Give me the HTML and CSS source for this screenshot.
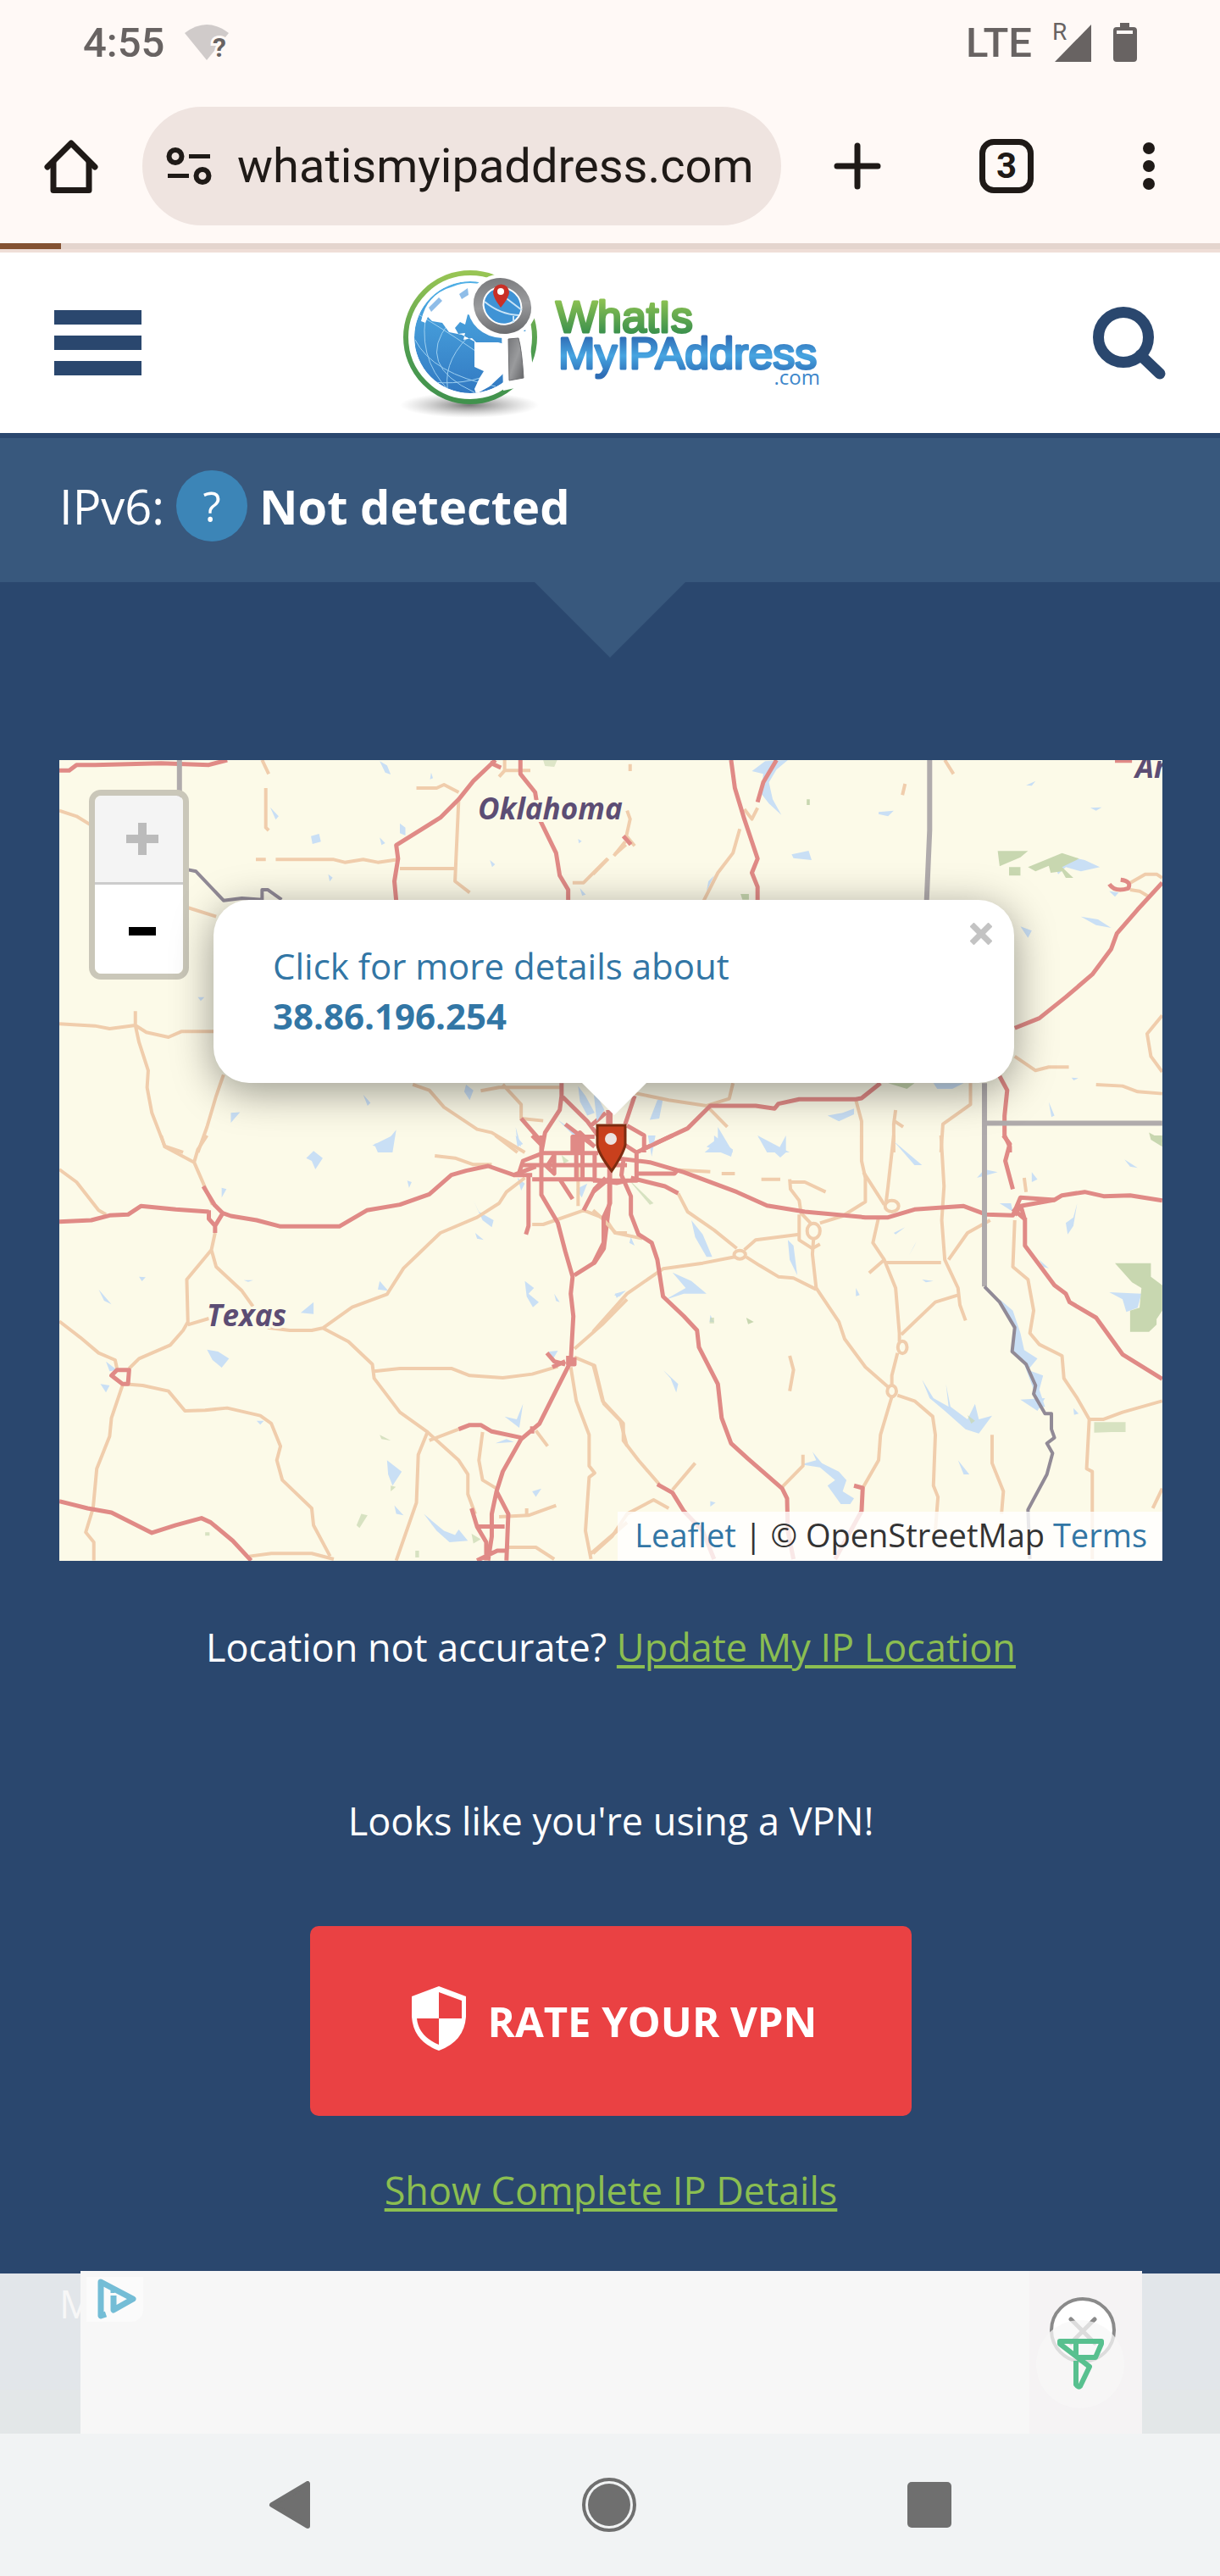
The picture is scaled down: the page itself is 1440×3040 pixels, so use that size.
FILE: index.html
```html
<!DOCTYPE html>
<html lang="en">
<head>
<meta charset="utf-8">
<meta name="viewport" content="width=device-width, initial-scale=1">
<title>What Is My IP Address</title>
<link rel="stylesheet" href="styles.css">
</head>
<body>
<div class="status">
  <div class="status-group">
    <span class="clock">4:55</span>
    <svg class="wifi" viewBox="0 0 52 42" aria-hidden="true"><path fill="#d0cbca" d="M0 10Q26-10 52 10L26 42z"/><text x="33" y="38" class="wifi-mark">?</text></svg>
  </div>
  <div class="status-group status-right">
    <span class="network">LTE</span>
    <svg class="signal" viewBox="0 0 48 48" aria-hidden="true"><text x="0" y="21" class="roaming">R</text><path fill="#686362" d="M46 3V47H3z"/></svg>
    <svg class="battery" viewBox="0 0 28 46" aria-hidden="true"><path fill="#686362" d="M8 0H19V5H24Q28 5 28 9V42Q28 46 24 46H4Q0 46 0 42V9Q0 5 4 5H8z"/><path fill="#fff9f6" d="M4 9H23V13H4z"/></svg>
  </div>
</div>
<div class="toolbar">
  <button class="icon-button" type="button" aria-label="Home"><svg width="64" height="64" viewBox="0 0 64 64"><path fill="none" stroke="#1f1a17" stroke-width="7" stroke-linejoin="round" stroke-linecap="round" d="M4 33L32 5L60 33"/><path fill="none" stroke="#1f1a17" stroke-width="7" stroke-linejoin="round" d="M11 27V60.500H53V27"/></svg></button>
  <div class="address">
    <svg width="54" height="44" viewBox="0 0 54 44" aria-hidden="true"><g fill="none" stroke="#1f1a17"><circle cx="11" cy="10.500" r="7.500" stroke-width="6"/><circle cx="43" cy="33.500" r="7.500" stroke-width="6"/><path stroke-width="5" d="M27 10.500H52M2 33.500H27"/></g></svg>
    <input type="text" value="whatismyipaddress.com" aria-label="Address">
  </div>
  <div class="actions">
    <button class="icon-button" type="button" aria-label="New tab"><svg width="64" height="64" viewBox="0 0 64 64"><path stroke="#1f1a17" stroke-width="7" stroke-linecap="round" d="M32 8V56M8 32H56"/></svg></button>
    <button class="icon-button tabs" type="button" aria-label="Open tabs">3</button>
    <button class="icon-button" type="button" aria-label="Menu"><svg width="48" height="64" viewBox="0 0 48 64"><g fill="#1f1a17"><circle cx="24" cy="11" r="7"/><circle cx="24" cy="32" r="7"/><circle cx="24" cy="53" r="7"/></g></svg></button>
  </div>
</div>
<div class="progress"><div class="progress-bar"></div></div>

<header class="site-header">
  <button class="icon-button burger" type="button" aria-label="Site menu"><span></span><span></span><span></span></button>
  <a class="logo" href="#">
    <svg width="500" height="184" viewBox="470 312 500 184" role="img" aria-label="WhatIsMyIPAddress.com">
      <defs>
        <linearGradient id="ring" x1="0" y1="0" x2="0" y2="1"><stop offset="0" stop-color="#98c554"/><stop offset=".6" stop-color="#4e9c50"/><stop offset="1" stop-color="#41924d"/></linearGradient>
        <linearGradient id="sea" x1="0" y1="0" x2="0" y2="1"><stop offset="0" stop-color="#50b0e6"/><stop offset="1" stop-color="#3279c2"/></linearGradient>
        <linearGradient id="metal" x1="0" y1="0" x2="1" y2="1"><stop offset="0" stop-color="#76777a"/><stop offset=".5" stop-color="#9a9b9d"/><stop offset="1" stop-color="#626366"/></linearGradient>
        <radialGradient id="shade"><stop offset="0" stop-color="#555" stop-opacity=".8"/><stop offset="1" stop-color="#999" stop-opacity="0"/></radialGradient>
        <linearGradient id="word1" gradientUnits="userSpaceOnUse" x1="0" y1="353" x2="0" y2="392"><stop offset="0" stop-color="#8cc152"/><stop offset="1" stop-color="#3c914d"/></linearGradient>
        <linearGradient id="word2" gradientUnits="userSpaceOnUse" x1="0" y1="396" x2="0" y2="442"><stop offset="0" stop-color="#2f6cb5"/><stop offset=".5" stop-color="#47a5e1"/><stop offset="1" stop-color="#2d6cb5"/></linearGradient>
        <clipPath id="globe"><circle cx="555" cy="397" r="66"/></clipPath>
      </defs>
      <ellipse cx="554" cy="477" rx="82" ry="15" fill="url(#shade)"/>
      <circle cx="555" cy="397" r="76" fill="#fff" stroke="url(#ring)" stroke-width="6"/>
      <g clip-path="url(#globe)">
        <circle cx="555" cy="397" r="66" fill="url(#sea)"/>
        <path fill="none" stroke="#9fd0f0" d="M490 400Q510 440 585 455M505 360Q490 420 530 460M530 380Q490 430 560 462M552 397Q520 430 530 465M494 370Q560 410 590 435M510 450Q560 455 600 430"/>
        <path fill="#fff" d="M497 378Q503 346 535 337Q560 326 600 345V382L570 376L552 370L549 382L543 379L537 386L541 393L549 392L547 400L557 398L562 403H588Q602 405 608 418L594 440L578 455L562 464L560 458L566 445L571 437L560 432V402L545 394L530 391L522 380L510 378L505 373L502 380z"/>
        <path fill="#8fbde8" d="M542 346L552 339L553 347L545 352zM506 362L518 350L522 354L509 367z"/>
      </g>
      <path fill="none" stroke="#fff" stroke-width="16" d="M594 326L632 350V372"/>
      <path fill="#fff" d="M592 390H624L631 452L594 460z"/>
      <ellipse cx="593" cy="360" rx="41" ry="38" fill="#fff"/>
      <ellipse cx="593" cy="360" rx="29" ry="26" transform="rotate(35 593 360)" fill="#55b0e6" stroke="url(#metal)" stroke-width="12"/>
      <ellipse cx="593" cy="360" rx="23" ry="21" transform="rotate(35 593 360)" fill="#3f93d5" stroke="#fff" stroke-width="2"/>
      <path fill="none" stroke="#c9e4f7" stroke-width="2" d="M572 355Q590 370 612 371M587 343L616 365M606 372V380"/>
      <path fill="#c92f27" d="M591 362Q582 350 582 344A9 9 0 0 1 601 344Q601 350 591 362z"/><circle cx="591" cy="343" r="4" fill="#fff"/>
      <path fill="url(#metal)" stroke="#6d6e71" d="M600 399L612 398Q616 412 618 445L601 448z"/>
      <text x="656" y="391" class="logo-what">WhatIs</text>
      <text x="659" y="434" class="logo-ip">MyIPAddress</text>
      <text x="968" y="453" text-anchor="end" class="logo-com">.com</text>
    </svg>
  </a>
  <button class="icon-button search" type="button" aria-label="Search"><svg width="86" height="86" viewBox="0 0 86 86"><circle cx="36" cy="36" r="29.500" fill="none" stroke="#2a476e" stroke-width="13"/><path stroke="#2a476e" stroke-width="13" stroke-linecap="round" d="M56 57L79 79"/></svg></button>
</header>

<main>
  <section class="ipv6">
    <span>IPv6:</span><button class="help" type="button">?</button><strong>Not detected</strong>
  </section>

  <div class="content">
    <div class="map">
      <svg class="tiles" viewBox="70 897 1302 945" preserveAspectRatio="xMidYMid slice" aria-hidden="true">
        <path fill="#fcfae8" d="M70 897H1372V1842H70z"/>
        <!-- north-west -->
        <g transform="translate(60 880) scale(.4337 .3333)">
          <path class="water" d="M895 55L915 70L925 102L910 95zM708 320L730 312L735 340L712 348zM950 275L965 290V318L950 310zM597 218L620 250L612 262zM895 325L910 345L900 352zM1035 95l5 20l-8 4zM1195 405l14 15l-8 10zM1435 330l10 8l-8 8zM400 890h18l-10 14zM850 1235l20 30l-8 10zM490 1300L515 1298L490 1335zM880 1410L915 1400L940 1360L930 1440H890zM1130 1200L1150 1220L1140 1255L1125 1225zM1435 1205L1455 1240L1480 1300L1460 1310L1440 1260zM1265 1350L1280 1420L1270 1410zM1380 1325L1440 1380L1430 1390zM1440 505l16 22l-10 4zM755 455l12 12l-8 14z"/>
          <path class="park" opacity=".6" d="M1340 51H1378L1370 75L1345 72z"/>
          <g class="minor"><path d="M23 230L70 250L120 290M365 570L450 605M575 51L593 100M585 150V290L593 300M558 403H585M612 403H770L800 413L850 403L890 413L945 403M950 435H1100M1110 190L1100 480L1140 520M995 150H1050L1070 138L1110 165M1420 485H1450L1515 400M1535 385L1565 350M1235 51V88H1305M1235 88L1220 110"/><path d="M23 985L120 992L160 1002L230 990L260 1015L320 1032L355 1012H443M230 940V990L240 1050L265 1150L262 1210L275 1300L310 1418L360 1440M470 1165L450 1240L425 1350L400 1440M985 1200L1030 1220L1070 1280L1160 1358L1200 1370L1290 1440M1170 1222L1220 1210H1390M1230 1200L1280 1270V1320L1340 1328"/></g>
          <path class="major" d="M23 88H50L70 68L120 68L300 62L430 68L480 51M1210 51L1150 125L1110 190L1060 255L940 352L945 400L935 480L940 548M1278 51V100L1318 165L1330 260L1375 380L1385 460L1408 510V548M1195 60L1225 78M1390 1195V1240L1460 1330L1500 1400M1390 1240L1385 1290L1345 1370L1335 1440M1523 1290V1340M1340 1410L1300 1350L1280 1320M1470 1345L1510 1300M1420 1440V1385L1480 1385M1440 1440V1370L1480 1420M1400 1340L1480 1420"/>
          <path class="state" d="M350 51V185"/><path class="river" d="M365 437L395 445L470 548L520 540L575 545V510L590 510L628 545"/>
        </g>
        <!-- north-east -->
        <g transform="translate(700 880) scale(.4464 .3333)">
          <path class="water" d="M420 90L455 55L515 51L485 85L465 130L475 190L498 245L465 205L445 170L450 100zM755 235L795 230L780 250L755 242zM525 385L570 372L578 405L530 398zM1215 410L1250 390L1300 405L1340 430L1290 445L1250 430L1230 455zM1290 605L1335 615L1370 645L1330 635zM1130 640L1160 655L1150 680zM1145 140L1170 125L1160 142zM1315 220L1345 218L1330 230zM900 1195H980L950 1215H910zM170 1255L185 1250L175 1320L150 1325zM1205 1262L1220 1310L1212 1315zM620 1310L660 1300L690 1285V1305L650 1330zM330 1350L370 1440H295L330 1400zM435 1380L520 1440H460zM320 460L300 515L305 480zM1365 515L1390 520L1380 535zM0 1210L30 1290L10 1330zM1265 1175l18 2l-12 8z"/>
          <path class="park" d="M1070 373H1150L1130 395L1075 427zM1100 430H1130V460H1100zM1150 430L1240 380L1285 400L1240 430L1270 468L1250 468L1240 445L1210 450L1205 425L1170 445zM1470 1370L1505 1395V1420L1475 1395zM390 525H412V545H395zM780 1195H850L830 1215zM565 190h8v20h-8z"/>
          <g class="minor"><path d="M930 51L953 100M825 135L818 175M435 220L420 260L400 225M388 295L370 380L330 450L293 548M90 230L98 260L88 320L110 355M85 340L55 390M40 400L0 455M98 65V90M110 1230L200 1255L300 1275L355 1350M370 1195L360 1250L300 1275M695 1255L710 1330V1440M800 1290L795 1340V1440M798 1330L820 1350"/><path d="M998 1195V1270L925 1340L920 1440M1115 1100L1170 1150L1205 1138H1258M1330 1200L1400 1205L1440 1225L1505 1232M1505 955L1465 1020L1475 1100L1505 1155M1415 490L1460 455H1490L1505 468M1420 510L1445 515L1470 535"/></g>
          <path class="major" d="M365 51L375 150L400 260L420 340L435 400L420 450L435 500V548M485 51L450 130L435 200M1505 485L1440 580L1385 665L1370 720L1320 810L1250 890L1180 965L1115 1000M1365 490Q1380 520 1415 505Q1425 480 1395 475M1075 1170L1095 1220L1088 1310V1380L1102 1420V1440M760 1195L710 1248L695 1252H545L490 1268L480 1285L430 1275H310L250 1355L130 1430M110 1240L85 1340M90 1345L135 1380V1440M40 1290V1340M80 320L100 350M1380 53H1425"/>
          <path class="state" d="M890 51V300L882 548M1035 1195V1440M1035 1337H1505"/>
        </g>
        <!-- south-west -->
        <g transform="translate(60 1340) scale(.4337 .3333)">
          <path class="water" d="M695 80L715 55L740 80L720 120L710 90zM875 35L930 0L915 50zM465 185L478 190L465 220zM970 160L982 165L975 185zM130 545L165 598L145 585zM240 500l18 2l-10 14zM895 515L918 550L890 545zM680 628L715 590V632zM425 758L455 765L485 790L465 822L440 795zM150 800L180 830L160 835zM135 880L160 885L150 910zM1290 515L1315 540L1300 560L1328 590L1312 608L1295 570zM1285 950L1275 1035L1235 995L1268 1005zM915 1150L955 1190L930 1240L918 1200zM1210 1090L1240 1075L1260 1085zM935 1310L960 1345L940 1340zM1015 1340L1070 1400L1100 1415L1110 1395L1135 1435L1085 1440L1050 1400zM1310 1260L1335 1250L1320 1280zM1150 230L1165 270L1205 300L1200 325L1175 300zM1155 345L1178 370L1160 365zM1265 0L1285 30L1270 40zM1430 190L1460 170L1445 220zM1355 765L1380 762L1365 795zM1535 560L1565 550L1540 575zM1270 150L1290 170L1280 195zM1370 560l15 30l-10-4zM560 1010h20l-10 14zM525 512h26l-14 6z"/>
          <path class="park" opacity=".7" d="M1145 1410L1170 1430L1150 1445zM845 1340L862 1345L840 1390L832 1380zM895 1060L925 1080L900 1075zM1390 70l20 20l-14 10zM925 1240l14 4l-14 16zM420 1405h12v12h-12zM992 1470h10v24h-10z"/>
          <g class="minor"><path d="M300 0L310 40L390 95L440 245M390 95L400 50L425 0M23 120L70 165L130 265L150 280M447 345L437 405L370 510L373 660L360 690L325 742L240 790L213 825M437 405L450 465L520 550L550 605M373 670L430 648M23 658L80 715L130 770L175 795L180 825M200 880L250 885L320 905L365 975L420 973L480 965L570 992L600 1020L625 1100L615 1150L630 1220L710 1320L715 1380L760 1490M195 885L165 1000L160 1065L125 1180L115 1320L95 1405L117 1440V1505"/><path d="M590 680L650 690H710L740 682L820 608L915 562L960 470L1000 420L1060 345L1160 290L1220 240L1240 200L1290 150M740 682L810 730L875 810L880 860L950 980L1025 1050L1110 1150L1135 1200V1270L1155 1340M880 835L950 825H1090L1140 850L1230 858L1310 845L1380 818M1025 1050L1000 1130L995 1300L940 1505M1030 1080L1110 1040M1175 1050L1165 1150L1175 1220L1213 1250M1045 72L1100 80L1150 103H1200M1210 0L1270 60M1310 315H1340L1450 265L1510 295L1535 345H1568M1568 580L1500 670L1425 755M1425 785L1480 815L1505 950L1550 1010L1568 1100M1415 820L1430 940L1465 1060V1170L1480 1195L1465 1210L1455 1400L1470 1500M1470 1480L1568 1370M1220 1350L1300 1345L1375 1310M1295 1320V1345M1245 1458H1320L1370 1500M540 1490L600 1480H710L770 1500M1320 1045L1352 1100M1435 100V250"/></g>
          <path class="major" d="M23 305L110 300L160 283L210 280L245 250L340 262L430 270M468 275L490 285L560 300L625 322H785L860 265L950 245L1030 208L1090 140L1130 125L1190 108L1260 140L1320 110M430 265V295L447 320L468 275L445 245L415 180M447 315V345M23 1295L100 1320L165 1335L275 1407L340 1380L410 1355L435 1370L495 1435L545 1505"/>
          <path class="major" d="M1335 0V210L1380 310L1400 410L1420 500L1415 560L1422 640L1415 800L1380 890L1330 1020L1280 1075L1230 1190L1213 1260L1200 1340V1420L1190 1505M1213 1260L1245 1340L1240 1505M1110 1040L1140 1025H1170L1200 1048L1280 1070M1520 60V240L1505 400L1480 450L1425 495M1310 0L1340 40M1275 130L1285 90L1340 62H1490M1280 105H1568M1260 140H1310M1310 155H1470L1540 168L1568 160M1430 0V150M1447 0V150M1480 60V150M1370 70L1350 110L1370 135V70M1300 140V320L1293 350M1385 155L1420 225M1450 265L1480 190L1510 150M1350 770L1370 800L1400 810M1365 820L1400 800M1408 780V810H1425V785M165 850L180 830H213L210 880H195zM1160 1385H1235M1145 1320L1160 1385L1185 1440V1505M1160 1505L1215 1470H1240M1310 1030V1055"/>
        </g>
        <!-- south-east -->
        <g transform="translate(700 1340) scale(.4464 .3333)">
          <path class="water" d="M870 865L900 930L940 960L933 880L945 960L990 1005L1010 950L1020 1005L1055 992L1020 1055L985 1040L930 975L890 930zM580 1120L605 1160L650 1190L670 1220L660 1260L690 1285L680 1305L655 1305L620 1240L640 1220L600 1175L550 1165L590 1150zM260 300L290 350L315 430L300 430L270 360zM210 485L260 515L300 560H240L190 582L245 540zM515 370L530 390L540 495L520 440zM300 40L320 20L320 0L370 50L365 75L310 45zM435 5L490 50L510 0V60L495 78L460 35zM795 20L870 105L850 105zM1075 580L1110 620L1130 700L1140 760L1175 790L1150 830L1190 850L1180 900L1195 960L1170 970L1165 900L1140 810L1110 765L1115 680zM1130 935L1195 930L1175 975zM1280 240L1270 320L1255 350L1250 310L1270 290zM1180 440L1205 470L1190 465zM1365 555L1450 560L1440 610L1410 625L1400 580zM1405 85L1440 115L1420 110zM1015 150L1035 120L1070 130zM1075 240L1105 240L1110 270zM965 1150L995 1200L980 1200zM185 830L225 880L220 910L205 860zM55 565L85 550L70 570zM855 375L835 425L850 390zM870 510L900 515L880 520zM145 0H165L155 75zM630 390l8 25M645 385l8 25zM795 345L825 325L800 350zM310 635l10 25h-12zM695 540l10 25l-10 4zM755 735l8 30zM1160 130L1175 155L1160 165zM1205 345L1235 385zM100 360l10 30l-14-10zM1270 965l14 20l-12 4zM310 1295l14 5l-14 14z"/>
          <path class="park" d="M1380 452H1475V500L1505 530V620L1490 650V670L1470 695H1420V620L1445 610L1450 540L1425 520zM1480 0H1505V25zM405 645L425 660L410 668z"/><path class="park" opacity=".7" d="M1325 1015H1408V1050H1370L1325 1052zM90 150L160 240L150 245zM310 645h10v20h-12zM990 990L1010 1010L1000 1020z"/>
          <g class="minor"><path d="M225 205L250 270L320 335L380 400M405 430L440 460L490 500L530 505L590 545M0 695L90 560L185 472L290 452L375 430M400 405L430 370L545 350M600 310L660 285L720 235V150L710 90V0M520 155L522 190L545 230L550 275L575 310M445 155H495M520 165H560L615 200M340 135H375M225 122L310 128M583 365L580 420L590 540L650 660L665 720L720 820L780 890M790 925L760 1060L755 1150L713 1248M805 920L850 940L898 995L905 1060L900 1240L912 1280L905 1400"/><path d="M795 0L780 180L775 235M715 130L770 245M755 290L740 380L770 440L800 540L810 700V730M805 770L790 850V890M815 705L905 590L965 565M770 450H920M940 440L990 345L1050 300M920 0L928 180L922 300L930 440L965 540L970 600L985 655M730 487L770 440M1140 150L1145 200M1115 300L1110 465L1150 510L1165 620L1155 700L1180 740L1240 780L1245 860L1280 930L1312 1005L1305 1180L1320 1190V1500M1312 1005H1350L1400 980L1505 940M1055 1060V1160L1085 1260L1080 1340M0 810L25 940L80 1020V1080L120 1150L175 1235M210 1255L270 1160M500 1245L555 1170V1130M0 1480L50 1420L90 1340L160 1290L200 1320M1505 1250L1480 1320M520 780L530 830L520 905M545 280V370L580 400L600 385M0 265L25 295L60 345L130 365"/><ellipse cx="388" cy="422" rx="15" ry="15"/><ellipse cx="583" cy="338" rx="17" ry="27"/><ellipse cx="790" cy="905" rx="12" ry="20"/><ellipse cx="790" cy="250" rx="18" ry="20"/><ellipse cx="818" cy="750" rx="12" ry="22"/></g>
          <path class="major" d="M45 100V240L28 290V380L0 455M80 90L75 140L100 215V280L120 350L155 380L170 440L185 570L240 640L275 690L280 750L330 880L340 1000L365 1090L410 1145L500 1250L513 1285L515 1400L530 1500M60 80L150 95L240 130L380 200L460 248L560 270L720 290H780L850 262L980 250L1040 280L1110 283L1130 220L1220 228L1240 212L1300 200L1350 215L1420 212L1505 230M100 150L190 180L225 205M115 135H215L225 120M0 160H115V60L80 30M115 60L210 0M0 105H45M0 200L45 150"/>
          <path class="major" d="M1115 283L1130 250L1220 228M1130 245L1142 300V390L1220 530L1250 560L1260 590L1330 645L1400 775L1505 862M1110 260L1145 300M1085 0L1102 30L1090 90L1110 190M170 1235L210 1265L240 1330L290 1400L320 1500M690 1240L713 1248L710 1330L640 1500"/>
          <path class="state" d="M1035 0V535"/><path class="river" d="M1035 535L1075 590L1115 680L1108 765L1145 810L1170 885L1165 915L1195 985H1212V1040L1220 1070L1200 1090L1215 1125L1200 1200L1150 1325L1155 1500"/>
        </g>
        <path fill="#c9401d" stroke="#7d2c10" stroke-width="3" d="M705 1328H738V1351Q736 1361 722 1382Q706 1361 705 1351z"/><circle cx="721" cy="1344" r="7" fill="#ece4e1"/>
        <g class="place"><text x="564" y="967">Oklahoma</text><text x="244" y="1565">Texas</text><text x="1340" y="918">Ar</text></g>
      </svg>
      <div class="zoom"><button type="button" disabled aria-label="Zoom in"><svg width="38" height="38" viewBox="0 0 38 38"><path fill="#bbb" d="M14 0H24V14H38V24H24V38H14V24H0V14H14z"/></svg></button><button type="button" aria-label="Zoom out"><svg width="32" height="10" viewBox="0 0 32 10"><path d="M0 0H32V10H0z"/></svg></button></div>
      <div class="popup">
        <a href="#">Click for more details about<br><strong>38.86.196.254</strong></a>
        <button class="close" type="button" aria-label="Close popup"><svg width="26" height="26" viewBox="0 0 26 26"><path stroke="#c3c3c3" stroke-width="7" d="M2 2L24 24M24 2L2 24"/></svg></button>
      </div>
      <div class="attribution"><a href="#">Leaflet</a> | © OpenStreetMap <a href="#">Terms</a></div>
    </div>
    <p class="line">Location not accurate? <a href="#">Update My IP Location</a></p>
    <p class="line vpn">Looks like you're using a VPN!</p>
    <button class="rate" type="button"><svg width="64" height="76" viewBox="0 0 64 76" aria-hidden="true"><path fill="#fff" d="M32 0L64 12V36Q62 65 32 76Q2 65 0 36V12z"/><path fill="#ea4143" d="M32 7L59 17V38H32zM6 38H32V69Q8 59 6 38z"/></svg>RATE YOUR VPN</button>
    <p class="line details"><a href="#">Show Complete IP Details</a></p>
  </div>
</main>

<aside class="ad-strip">
  <span class="behind">M</span>
  <div class="ad">
    <a class="adchoices" href="#" aria-label="AdChoices"><svg width="48" height="48" viewBox="0 0 48 48"><g fill="none" stroke="#74bdd6" stroke-linejoin="round"><path stroke-width="7" d="M11 42L5 44V4L43 24L20 37V20"/><path stroke-width="5" d="M19 14V17"/></g></svg></a>
    <div class="ad-side"><button class="icon-button" type="button" aria-label="Close ad"><svg width="108" height="136" viewBox="1222 2710 108 136"><circle cx="1278" cy="2752" r="37" fill="#fff" stroke="#8a8a8a" stroke-width="4"/><path stroke="#8a8a8a" stroke-width="5" stroke-linecap="round" d="M1264 2739L1292 2767M1292 2739L1264 2767"/><circle cx="1275" cy="2792" r="52" fill="#f7f7f7" opacity=".75"/><path fill="none" stroke="#58c08f" stroke-width="6" stroke-linejoin="round" d="M1271 2784H1293L1300 2768V2765H1251V2768L1286 2795L1275 2818Q1273 2820 1270 2816V2788M1270 2765V2783"/></svg></button></div>
  </div>
</aside>
<nav class="system-nav">
  <button class="icon-button" type="button" aria-label="Back"><svg width="50" height="56" viewBox="0 0 50 56"><path fill="#6f6f6f" stroke="#6f6f6f" stroke-width="6" stroke-linejoin="round" d="M4 28L46 3V53z"/></svg></button>
  <button class="icon-button" type="button" aria-label="Home screen"><svg width="64" height="64" viewBox="0 0 64 64"><circle cx="32" cy="32" r="30" fill="none" stroke="#6f6f6f" stroke-width="4"/><circle cx="32" cy="32" r="25" fill="#6f6f6f"/></svg></button>
  <button class="icon-button" type="button" aria-label="Recent apps"><svg width="52" height="54" viewBox="0 0 52 54"><rect width="52" height="54" rx="5" fill="#6f6f6f"/></svg></button>
</nav>
</body>
</html>
```
FILE: styles.css
```css
* { box-sizing: border-box; }

body {
  margin: 0;
  min-height: 100vh;
  display: flex;
  flex-direction: column;
  font-family: "Open Sans", "Noto Sans", sans-serif;
  background: #f1f3f4;
}

button { font: inherit; cursor: pointer; }

svg { display: block; }

.icon-button {
  padding: 0;
  border: 0;
  background: none;
}

/* Phone status bar */
.status {
  height: 100px;
  padding: 0 98px;
  display: flex;
  justify-content: space-between;
  align-items: center;
  background: #fff9f6;
  color: #686362;
  font: 500 49px/1 Roboto, sans-serif;
}

.status-group { display: flex; align-items: center; gap: 24px; }
.wifi { width: 52px; height: 42px; overflow: visible; }
.wifi-mark { font: 700 32px Roboto, sans-serif; fill: #686362; stroke: #fff9f6; stroke-width: 6px; paint-order: stroke; }
.signal { width: 48px; height: 48px; overflow: visible; }
.roaming { font: 400 28px Roboto, sans-serif; fill: #686362; }
.battery { width: 28px; height: 46px; }

/* Browser toolbar */
.toolbar {
  padding: 26px 60px 21px 52px;
  display: flex;
  align-items: center;
  background: #fff9f6;
}

.address {
  flex: 1;
  min-width: 0;
  height: 140px;
  margin: 0 58px 0 52px;
  padding: 0 12px 0 28px;
  display: flex;
  align-items: center;
  gap: 30px;
  border-radius: 70px;
  background: #efe4e0;
}

.address svg { flex: none; }

.address input {
  flex: 1;
  min-width: 0;
  padding: 0;
  border: 0;
  outline: 0;
  background: none;
  color: #1f1a17;
  font: 400 56px/72px Roboto, sans-serif;
}

.actions { display: flex; align-items: center; gap: 112px; }

.tabs {
  width: 64px;
  height: 64px;
  border: 7px solid #1f1a17;
  border-radius: 17px;
  color: #1f1a17;
  font: 700 42px/50px Roboto, sans-serif;
}

.progress { height: 11px; border-bottom: 4px solid #efded7; background: #e4d5ce; }
.progress-bar { width: 5%; height: 7px; background: #845232; }

/* Site header */
.site-header {
  height: 219px;
  padding: 0 64px;
  display: grid;
  grid-template-columns: 1fr auto 1fr;
  align-items: center;
  border-bottom: 6px solid #2a476e;
  background: #fff;
}

.burger { width: 103px; display: grid; gap: 13px; }
.burger span { height: 17px; background: #2a476e; }
.search { justify-self: end; }

.logo-what,
.logo-ip { font: 400 52px "Liberation Sans", sans-serif; stroke-width: 3px; stroke-linejoin: round; }
.logo-what { fill: url(#word1); stroke: url(#word1); }
.logo-ip { fill: url(#word2); stroke: url(#word2); }
.logo-com { font: 400 24px "Open Sans", sans-serif; fill: #3d87cb; }

/* IPv6 band */
main { background: #2a476e; color: #fff; }

.ipv6 {
  position: relative;
  height: 170px;
  padding: 0 70px 10px;
  display: flex;
  align-items: center;
  gap: 14px;
  background: #38587d;
  font-size: 56px;
}

.ipv6::after {
  content: "";
  position: absolute;
  top: 100%;
  left: 50%;
  margin-left: -89px;
  border: 89px solid transparent;
  border-top-color: #38587d;
  border-bottom: 0;
}

.help {
  width: 84px;
  height: 84px;
  padding: 0;
  border: 0;
  border-radius: 50%;
  background: #3c85b7;
  color: #fff;
  font-size: 49px;
}

.content {
  padding: 210px 68px 68px 70px;
  display: flex;
  flex-direction: column;
  align-items: center;
}

/* Map */
.map {
  position: relative;
  width: 100%;
  aspect-ratio: 1302 / 945;
  overflow: hidden;
}

.tiles { width: 100%; height: 100%; }
.tiles path, .tiles ellipse { vector-effect: non-scaling-stroke; }
.water { fill: #c9dff5; }
.park { fill: #c8d7b0; }
.minor { fill: none; stroke: #f0cdac; stroke-width: 4px; stroke-linejoin: round; }
.major { fill: none; stroke: #e08a86; stroke-width: 5px; stroke-linejoin: round; }
.state { fill: none; stroke: #b0abac; stroke-width: 6px; }
.river { fill: none; stroke: #918a96; stroke-width: 4px; stroke-linejoin: round; }
.place { font: italic 700 35px "Open Sans", sans-serif; fill: #5c4d74; stroke: #fcfae8; stroke-width: 6px; paint-order: stroke; }

.zoom {
  position: absolute;
  top: 35px;
  left: 35px;
  width: 118px;
  border: 7px solid #cac7b9;
  border-radius: 14px;
}

.zoom button {
  width: 100%;
  height: 105px;
  padding: 4px 0 0 7px;
  display: grid;
  place-items: center;
  border: 0;
  border-radius: 0 0 8px 8px;
  background: #fff;
}

.zoom button:first-child {
  padding-top: 0;
  border-bottom: 3px solid #ccc;
  border-radius: 8px 8px 0 0;
  background: #f4f4f4;
}

.popup {
  position: absolute;
  top: 165px;
  left: 182px;
  right: 175px;
  padding: 48px 70px 50px;
  border-radius: 42px;
  background: #fff;
  box-shadow: 0 10px 49px rgba(0, 0, 0, .4);
  font-size: 42px;
  line-height: 59px;
}

.popup::after {
  content: "";
  position: absolute;
  top: 100%;
  left: 50%;
  margin-left: -38px;
  border: 38px solid transparent;
  border-top-color: #fff;
  border-bottom: 0;
}

.popup a,
.attribution a { color: #3276a5; text-decoration: none; }

.close {
  position: absolute;
  top: 27px;
  right: 26px;
  padding: 0;
  border: 0;
  background: none;
}

.attribution {
  position: absolute;
  right: 0;
  bottom: 0;
  padding: 0 18px 4px 20px;
  background: rgba(255, 255, 255, .8);
  color: #333;
  font-size: 38px;
  line-height: 54px;
}

/* Text below the map */
.line { margin: 72px 0 0; font-size: 45px; line-height: 60px; text-align: center; }
.line a { color: #8bbe51; text-underline-offset: 4px; text-decoration-thickness: 4px; }
.vpn { margin-top: 145px; }

.rate {
  width: 710px;
  max-width: 100%;
  height: 224px;
  margin-top: 94px;
  padding: 0 0 0 8px;
  display: flex;
  justify-content: center;
  align-items: center;
  gap: 26px;
  border: 0;
  border-radius: 10px;
  background: #ea4143;
  color: #fff;
  font-size: 49px;
  font-weight: 700;
}

.rate svg { margin-bottom: 7px; }

.details { margin-top: 58px; }

/* Advert */
.ad-strip {
  position: relative;
  flex: 1;
  min-height: 186px;
  padding: 0 92px 0 95px;
  display: flex;
  background: linear-gradient(#e2e6ea 137px, #e3e7e8 137px);
}

.behind {
  position: absolute;
  top: 5px;
  left: 70px;
  color: #f7f7f7;
  font-size: 45px;
}

.ad {
  position: relative;
  flex: 1;
  margin-top: -3px;
  display: flex;
  justify-content: space-between;
  background: #f7f7f7;
}

.adchoices {
  width: 67px;
  height: 53px;
  margin: 7px;
  padding: 2px 12px;
  border-radius: 0 0 14px 0;
  background: #fbfbfb;
}

.ad-side { width: 133px; padding: 28px 7px 0; background: #f5f3f4; }

/* System navigation */
.system-nav {
  height: 168px;
  padding: 0 22%;
  display: flex;
  justify-content: space-between;
  align-items: center;
  background: #f1f3f4;
}
```
